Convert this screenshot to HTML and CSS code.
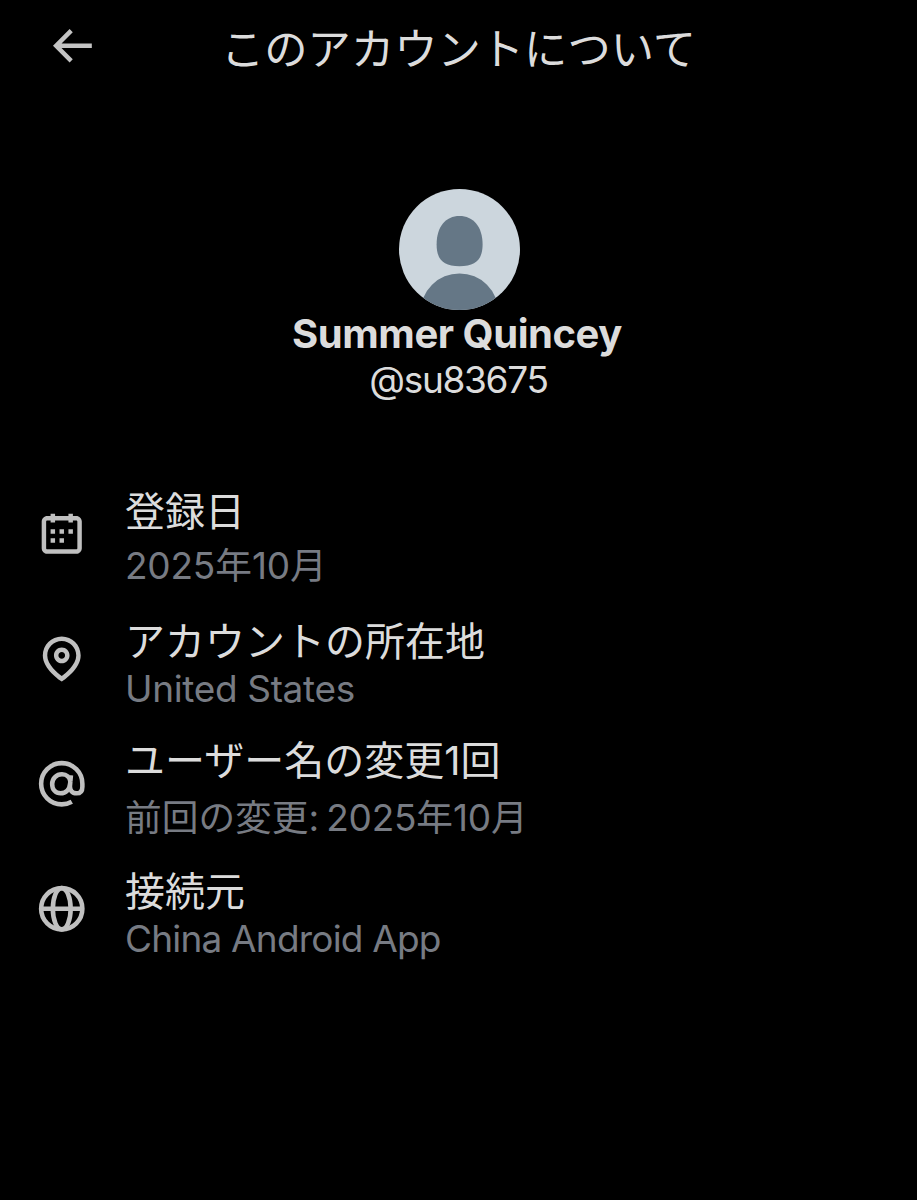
FILE: index.html
```html
<!DOCTYPE html>
<html lang="ja">
<head>
<meta charset="utf-8">
<title>このアカウントについて</title>
<link rel="stylesheet" href="styles.css">
</head>
<body>
<header class="topbar">
  <svg class="back" viewBox="0 0 24 24"><path d="M7.414 13l5.043 5.04-1.414 1.42L3.586 12l7.457-7.460 1.414 1.420L7.414 11H21v2H7.414z"/></svg>
  <h1 class="heading">このアカウントについて</h1>
</header>
<section class="profile">
  <svg class="avatar" viewBox="0 0 120 120">
    <defs><clipPath id="disc"><circle cx="60" cy="60" r="60"/></clipPath></defs>
    <g clip-path="url(#disc)">
      <path fill="#ccd6dd" d="M0 0h120v120H0z"/>
      <path fill="#657786" d="M60 26.700C46.500 26.700 37.300 37 37.300 55C37.300 70 44 76.500 60 76.500S82.900 70 82.900 55C82.900 37 73.500 26.700 60 26.700z"/>
      <ellipse fill="#657786" cx="60" cy="122" rx="38.500" ry="38.300"/>
    </g>
  </svg>
  <div class="name">Summer Quincey</div>
  <div class="handle">@su83675</div>
</section>
<main class="facts">
  <div class="fact">
    <svg class="icon" viewBox="0 0 24 24"><path d="M7 4V3h2v1h6V3h2v1h1.500C19.890 4 21 5.120 21 6.500v12c0 1.380-1.110 2.500-2.500 2.500h-13C4.120 21 3 19.880 3 18.500v-12C3 5.120 4.120 4 5.500 4H7zm0 2H5.500c-.27 0-.5.22-.5.5v12c0 .28.23.5.5.5h13c.28 0 .5-.22.5-.5v-12c0-.28-.22-.5-.5-.5H17v1h-2V6H9v1H7V6zm0 6h2v-2H7v2zm0 4h2v-2H7v2zm4-4h2v-2h-2v2zm0 4h2v-2h-2v2zm4-4h2v-2h-2v2z"/></svg>
    <div class="text text-ja">
      <div class="label">登録日</div>
      <div class="value value-ja"><span class="num">2025</span>年<span class="num">10</span>月</div>
    </div>
  </div>
  <div class="fact">
    <svg class="icon" viewBox="0 0 24 24"><path d="M12 7c-1.930 0-3.500 1.570-3.500 3.500S10.070 14 12 14s3.500-1.570 3.500-3.500S13.930 7 12 7zm0 5c-.827 0-1.500-.673-1.500-1.500S11.173 9 12 9s1.500.673 1.500 1.500S12.827 12 12 12zm0-10c-4.687 0-8.500 3.813-8.500 8.500 0 5.967 7.621 11.116 7.945 11.332l.555.37.555-.37c.324-.216 7.945-5.365 7.945-11.332C20.500 5.813 16.687 2 12 2zm0 17.770c-1.665-1.241-6.500-5.196-6.500-9.270C5.500 6.916 8.416 4 12 4s6.500 2.916 6.500 6.500c0 4.073-4.835 8.028-6.500 9.270z"/></svg>
    <div class="text">
      <div class="label">アカウントの所在地</div>
      <div class="value states">United States</div>
    </div>
  </div>
  <div class="fact">
    <svg class="icon line" viewBox="0 0 24 24"><path d="M16.500 20.100C15.200 20.850 13.700 21.250 12 21.250A9.250 9.250 0 1 1 21.250 12V13.300C21.250 15.300 20.200 16.300 18.650 16.300C16.700 16.300 15.500 15 15.700 12.800L16.100 8.200M15.900 11.200C15.700 9.200 14.200 7.750 12.100 7.750C9.600 7.750 7.700 9.600 7.700 12.100C7.700 14.700 9.300 16.250 11.500 16.250C13.900 16.250 15.500 14.500 15.750 12"/></svg>
    <div class="text text-ja">
      <div class="label">ユーザー名の変更<span class="one">1</span>回</div>
      <div class="value value-ja">前回の変更<span class="num colon">: </span><span class="num">2025</span>年<span class="num">10</span>月</div>
    </div>
  </div>
  <div class="fact">
    <svg class="icon line" viewBox="0 0 24 24"><circle cx="12" cy="12" r="9.250"/><ellipse cx="12" cy="12" rx="4" ry="9.250"/><path d="M2.750 12h18.500"/></svg>
    <div class="text">
      <div class="label">接続元</div>
      <div class="value app">China Android App</div>
    </div>
  </div>
</main>
</body>
</html>
```
FILE: styles.css
```css
* { box-sizing: border-box; }
body {
  margin: 0;
  height: 1200px;
  background: #000;
  color: #dcdcdc;
  font-family: Inter, "Noto Sans CJK JP", sans-serif;
  overflow: hidden;
}
.topbar {
  display: grid;
  grid-template-columns: 145px 1fr 145px;
  align-items: center;
  height: 92px;
}
.back {
  width: 53.500px;
  height: 53.500px;
  margin-left: 45px;
  fill: #c4c4c4;
}
.heading {
  margin: 0;
  text-align: center;
  font: 400 43.300px/60px "Noto Sans CJK JP", sans-serif;
  white-space: nowrap;
}
.profile {
  display: flex;
  flex-direction: column;
  align-items: center;
  padding: 97px 0 0 2px;
  height: 379.500px;
}
.avatar {
  width: 121px;
  height: 121px;
  flex: none;
}
.name {
  font-size: 40px;
  font-weight: 700;
  line-height: 48px;
  letter-spacing: -0.450px;
  margin-left: -5px;
}
.handle {
  font-size: 37px;
  line-height: 43px;
  letter-spacing: -1.300px;
  margin-left: -2px;
}
.facts { padding-left: 35px; }
.fact {
  display: flex;
  align-items: center;
  height: 125px;
  gap: 36.500px;
}
.icon {
  width: 53.500px;
  height: 53.500px;
  fill: #c0c0c0;
  flex: none;
}
.line {
  fill: none;
  stroke: #c0c0c0;
  stroke-width: 2.050;
}
.text {
  white-space: nowrap;
  padding-top: 3px;
}
.text-ja { padding-top: 5px; }
.label {
  font: 400 40px/56px "Noto Sans CJK JP", sans-serif;
}
.one {
  font-family: Inter, sans-serif;
}
.value {
  color: #777b83;
  font-size: 37px;
  line-height: 43px;
}
.states { letter-spacing: -0.350px; }
.app { letter-spacing: -0.800px; }
.value-ja {
  font: 400 36.700px/53px "Noto Sans CJK JP", sans-serif;
}
.num {
  font-family: Inter, sans-serif;
  font-size: 37px;
  letter-spacing: -0.200px;
}
.colon {
  white-space: pre;
  letter-spacing: -1.700px;
}
```
